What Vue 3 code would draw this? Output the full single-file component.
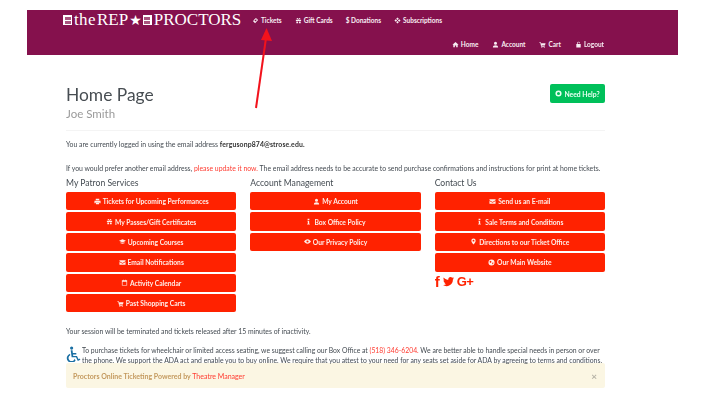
<script setup>
const icons = {
  ticket: 'M9 2l5 5-7 7-5-5 1.5-1.5 1 1 1-1-1-1zM9 5L6 8l2 2 3-3z',
  gift: 'M2 6h12v3H2zM3 10h4v4H3zM9 10h4v4H9zM4 2.5C5.5 1.5 7.5 3 8 5.5 8.5 3 10.5 1.5 12 2.5 13 3.5 11 5.5 8 5.5 5 5.5 3 3.5 4 2.5z',
  box: 'M8 1l3 3-3 3-3-3zM4 5l3 3-3 3-3-3zM12 5l3 3-3 3-3-3zM8 9l3 3-3 3-3-3z',
  home: 'M8 2l7 6.5h-2V14H9.5v-4h-3v4H3V8.5H1z',
  user: 'M8 1.5a3 3 0 1 1 0 7 3 3 0 0 1 0-7zM2 15c0-4 2-5.5 6-5.5s6 1.5 6 5.5z',
  cart: 'M1 3h3l.5 2H15l-1.5 5H6l.3 1.5H13V13H5L3 4.5H1zM5.5 13.5h2v2h-2zM11 13.5h2v2h-2z',
  lock: 'M3 7h10v8H3zM5 7V4.5a3 3 0 0 1 6 0V5H9.5v-.5a1.5 1.5 0 0 0-3 0V7z',
  help: 'M8 1a7 7 0 1 0 0 14A7 7 0 0 0 8 1zm0 3.5a3.5 3.5 0 1 1 0 7 3.5 3.5 0 0 1 0-7z',
  print: 'M4 1.5h8V5H4zM1 6h14v6h-2.5v-2h-9v2H1zM4.5 11h7v3.5h-7z',
  cap: 'M8 3l8 3.5L8 10 0 6.5zM3.5 9.5L8 11.5l4.5-2V12c-2.5 1.5-6.5 1.5-9 0z',
  mail: 'M1 3h14v2L8 9 1 5zM1 6.8L8 11l7-4.2V13H1z',
  calendar: 'M2 3h2.5V1.5H6V3h4V1.5h1.5V3H14v12H2zM3.5 6.5v7h9v-7z',
  info: 'M6 1.5h4v3H6zM5.5 6h4v7H11v2H5v-2h1.5V8h-1z',
  eye: 'M8 3c3.5 0 6 2.5 8 5-2 2.5-4.5 5-8 5s-6-2.5-8-5c2-2.5 4.5-5 8-5zm0 2.5a2.5 2.5 0 1 0 0 5 2.5 2.5 0 0 0 0-5z',
  pin: 'M8 1a5 5 0 0 1 5 5c0 3-3 6-5 9-2-3-5-6-5-9a5 5 0 0 1 5-5zm0 3a2 2 0 1 0 0 4 2 2 0 0 0 0-4z',
  globe: 'M8 1a7 7 0 1 0 0 14A7 7 0 0 0 8 1zM4 4l3 .5 1 2.5-2 2-2-1zM10 8l3 .5-2.5 4L9.5 10z',
}

const topLinks = [
  { label: 'Tickets', icon: 'ticket' },
  { label: 'Gift Cards', icon: 'gift' },
  { label: '$ Donations' },
  { label: 'Subscriptions', icon: 'box' },
]

const userLinks = [
  { label: 'Home', icon: 'home' },
  { label: 'Account', icon: 'user' },
  { label: 'Cart', icon: 'cart' },
  { label: 'Logout', icon: 'lock' },
]

const columns = [
  {
    title: 'My Patron Services',
    buttons: [
      { label: 'Tickets for Upcoming Performances', icon: 'print' },
      { label: 'My Passes/Gift Certificates', icon: 'gift' },
      { label: 'Upcoming Courses', icon: 'cap' },
      { label: 'Email Notifications', icon: 'mail' },
      { label: 'Activity Calendar', icon: 'calendar' },
      { label: 'Past Shopping Carts', icon: 'cart' },
    ],
  },
  {
    title: 'Account Management',
    buttons: [
      { label: 'My Account', icon: 'user' },
      { label: 'Box Office Policy', icon: 'info' },
      { label: 'Our Privacy Policy', icon: 'eye' },
    ],
  },
  {
    title: 'Contact Us',
    social: true,
    buttons: [
      { label: 'Send us an E-mail', icon: 'mail' },
      { label: 'Sale Terms and Conditions', icon: 'info' },
      { label: 'Directions to our Ticket Office', icon: 'pin' },
      { label: 'Our Main Website', icon: 'globe' },
    ],
  },
]
</script>

<template>
  <div class="page">
    <header class="navbar">
      <div class="nav-row">
        <div class="logo">
          <span class="logo-box"><i></i><i></i></span>
          <span class="logo-the">the</span><span>REP</span><span class="logo-star">★</span>
          <span class="logo-box"><i></i><i></i></span>
          <span>PROCTORS</span>
        </div>
        <nav class="top-links">
          <a v-for="l in topLinks" :key="l.label">
            <svg v-if="l.icon" viewBox="0 0 16 16"><path :d="icons[l.icon]" /></svg>
            {{ l.label }}
          </a>
        </nav>
      </div>
      <nav class="user-links">
        <a v-for="l in userLinks" :key="l.label">
          <svg viewBox="0 0 16 16"><path :d="icons[l.icon]" /></svg>
          {{ l.label }}
        </a>
      </nav>
    </header>

    <main class="content">
      <div class="page-head">
        <div>
          <h1>Home Page</h1>
          <div class="patron">Joe Smith</div>
        </div>
        <button class="help">
          <svg viewBox="0 0 16 16"><path fill-rule="evenodd" :d="icons.help" /></svg>
          Need Help?
        </button>
      </div>
      <hr />

      <p class="logged">You are currently logged in using the email address <b>fergusonp874@strose.edu.</b></p>
      <p class="prefer">If you would prefer another email address, <a>please update it now.</a> The email address needs to be accurate to send purchase confirmations and instructions for print at home tickets.</p>

      <div class="columns">
        <section v-for="c in columns" :key="c.title">
          <h4>{{ c.title }}</h4>
          <button v-for="b in c.buttons" :key="b.label" class="action">
            <svg viewBox="0 0 16 16"><path fill-rule="evenodd" :d="icons[b.icon]" /></svg>
            {{ b.label }}
          </button>
          <div v-if="c.social" class="social">
            <span class="fb">f</span>
            <svg viewBox="0 0 16 16"><path d="M16 3.1c-.6.3-1.2.4-1.9.5.7-.4 1.2-1 1.4-1.8-.6.4-1.3.7-2.1.8A3.3 3.3 0 0 0 7.8 5.6C5.1 5.5 2.7 4.2 1.1 2.2c-.9 1.5-.4 3.4 1 4.4-.5 0-1-.2-1.5-.4 0 1.6 1.1 3 2.6 3.3-.5.1-1 .1-1.5 0 .4 1.3 1.6 2.2 3.1 2.3A6.6 6.6 0 0 1 0 13.1 9.3 9.3 0 0 0 14.4 5c.6-.5 1.2-1.1 1.6-1.9z" /></svg>
            <span class="gplus">G+</span>
          </div>
        </section>
      </div>

      <p class="session">Your session will be terminated and tickets released after 15 minutes of inactivity.</p>

      <div class="ada">
        <svg viewBox="0 0 16 16"><path d="M6 0a1.7 1.7 0 1 1 0 3.4A1.7 1.7 0 0 1 6 0zM5 4h2l.3 3H11v1.5H7.500l.2 1.500h4l1.700 3.500 1.300-.6.600 1.300-2.700 1.200-1.900-3.900H6zM4.300 7.600l.2 1.700a3.300 3.300 0 1 0 4.700 3.700l1 1.800A5 5 0 1 1 4.300 7.600z" /></svg>
        <p>To purchase tickets for wheelchair or limited access seating, we suggest calling our Box Office at <a>(518) 346-6204.</a> We are better able to handle special needs in person or over<br />the phone. We support the ADA act and enable you to buy online. We require that you attest to your need for any seats set aside for ADA by agreeing to terms and conditions.</p>
      </div>

      <div class="notice">
        <span>Proctors Online Ticketing Powered by <a>Theatre Manager</a></span>
        <span class="close">×</span>
      </div>
    </main>

    <svg class="arrow" width="40" height="90" viewBox="0 0 40 90">
      <path d="M11 84L21 14" stroke="#f2121c" stroke-width="2" fill="none" />
      <path d="M21.5 4L27 17 16 16z" fill="#f2121c" />
    </svg>
  </div>
</template>

<style scoped>
.page {
  position: relative;
  width: 716px;
  height: 407px;
  padding-top: 10px;
  box-sizing: border-box;
  overflow: hidden;
  font-family: Lato, "Noto Sans", sans-serif;
  font-size: 6.88px;
  color: #444b52;
  filter: blur(0.4px);
}

a {
  color: #ff3b30;
}

.navbar {
  width: 651px;
  height: 45px;
  margin-left: 27px;
  background: #85114d;
  font-weight: 700;
  font-size: 6.5px;
}

.nav-row {
  display: flex;
  align-items: center;
  height: 20px;
  padding-left: 36px;
}

.logo {
  display: flex;
  align-items: center;
  width: 189px;
  height: 20px;
  font-family: "Liberation Serif", serif;
  font-size: 17px;
  font-weight: 400;
  color: #fff;
  white-space: nowrap;
}

.logo-the {
  letter-spacing: 0.4px;
  margin-right: 1px;
}

.logo-star {
  font-family: "DejaVu Sans", sans-serif;
  font-size: 14px;
  margin: 0 1px;
}

.logo-box {
  display: flex;
  flex-direction: column;
  gap: 1px;
  width: 9px;
  height: 10px;
  padding: 1.5px;
  box-sizing: border-box;
  margin-right: 2px;
  background: #fff;
}

.logo-box i {
  flex: 1;
  background: #a9557f;
}

.top-links {
  display: flex;
  gap: 13px;
}

.user-links {
  display: flex;
  justify-content: flex-end;
  gap: 14px;
  margin-top: 8px;
  padding-right: 74px;
}

.navbar a {
  display: flex;
  align-items: center;
  gap: 2px;
  height: 12px;
  color: #f8eef3;
  white-space: nowrap;
}

.navbar svg {
  width: 7px;
  height: 7px;
  fill: currentColor;
}

.content {
  width: 539px;
  margin-left: 66px;
}

.page-head {
  display: flex;
  justify-content: space-between;
  align-items: flex-start;
  padding-top: 29px;
}

h1 {
  margin: 0;
  font-size: 17.4px;
  line-height: 21px;
  font-weight: 400;
  color: #474d52;
}

.patron {
  margin-top: 2px;
  font-size: 11.5px;
  line-height: 14px;
  color: #9a9a9a;
}

.help {
  display: flex;
  align-items: center;
  justify-content: center;
  gap: 2px;
  width: 55px;
  height: 19px;
  padding: 0;
  border: none;
  border-radius: 2px;
  background: #00c05a;
  color: #eafff3;
  font: 700 6.8px Lato, sans-serif;
}

.help svg {
  width: 7px;
  height: 7px;
  fill: currentColor;
}

hr {
  height: 1px;
  margin: 9px 0 0;
  border: none;
  background: #f4f4f4;
}

p {
  margin: 0;
  line-height: 11px;
}

.logged {
  margin-top: 8px;
}

.logged b {
  color: #333;
  letter-spacing: 0.12px;
}

.prefer {
  margin-top: 13px;
  white-space: nowrap;
}

.columns {
  display: grid;
  grid-template-columns: repeat(3, 1fr);
  gap: 14px;
  margin-top: 3px;
}

h4 {
  margin: 0 0 3px;
  font-size: 8.6px;
  line-height: 12px;
  font-weight: 400;
  color: #444b52;
}

.action {
  display: flex;
  align-items: center;
  justify-content: center;
  gap: 2px;
  width: 100%;
  height: 18.4px;
  margin-bottom: 2px;
  padding: 0;
  border: none;
  border-radius: 2px;
  background: #ff2200;
  color: #ffeee8;
  font: 700 6.7px Lato, sans-serif;
}

.action svg {
  width: 7px;
  height: 7px;
  fill: currentColor;
}

.social {
  display: flex;
  align-items: center;
  gap: 3px;
  height: 15px;
  color: #ff2200;
  font: 700 15px/15px "Liberation Sans", sans-serif;
}

.social svg {
  width: 11px;
  height: 11px;
  fill: currentColor;
}

.gplus {
  font-size: 13px;
  letter-spacing: -0.5px;
}

.session {
  margin-top: 12px;
}

.ada {
  display: flex;
  align-items: flex-start;
  gap: 1px;
  height: 18px;
  margin-top: 8px;
}

.ada svg {
  flex: none;
  width: 15px;
  height: 16px;
  margin-top: 1px;
  fill: #1a6fa3;
}

.ada p {
  font-size: 6.84px;
  line-height: 10px;
  white-space: nowrap;
}

.notice {
  display: flex;
  justify-content: space-between;
  align-items: center;
  height: 25px;
  padding: 0 8px 0 7px;
  border-radius: 2px;
  background: #fbf6e3;
  color: #c49a5f;
  font-weight: 700;
  font-size: 7px;
}

.notice a {
  font-weight: 400;
}

.close {
  color: #b5b2a6;
  font-size: 10px;
}

.arrow {
  position: absolute;
  left: 245px;
  top: 24px;
}
</style>

<style>
body {
  background: #fff;
}
</style>
